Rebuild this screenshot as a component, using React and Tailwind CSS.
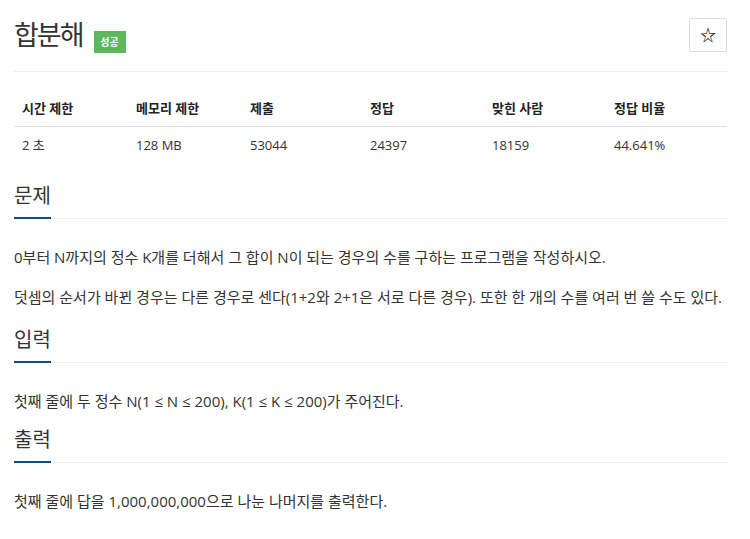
import React from "react";

const font = { fontFamily: '"Open Sans", "Noto Sans CJK KR", sans-serif' };

function Section({ title, children }) {
  return (
    <div>
      <div className="border-b border-[#eee] pb-0">
        <span className="inline-block text-[20px] leading-[30px] pb-[6px] border-b-2 border-[#0e4c86] mb-[-1px] text-[#333]">
          {title}
        </span>
      </div>
      <div className="mt-[26px]">{children}</div>
    </div>
  );
}

export default function App() {
  const heads = ["시간 제한", "메모리 제한", "제출", "정답", "맞힌 사람", "정답 비율"];
  const vals = ["2 초", "128 MB", "53044", "24397", "18159", "44.641%"];
  const widths = ["w-[114px]", "w-[114px]", "w-[120px]", "w-[122px]", "w-[122px]", ""];
  return (
    <div style={font} className="bg-white w-[750px] h-[539px] overflow-hidden text-[#333] pl-[14px] pr-[23px]">
      <div className="pt-[18px] pb-[19px] border-b border-[#eee] flex items-start justify-between">
        <div className="flex items-end h-[32px] mt-[2px]">
          <h1 className="text-[27px] leading-[34px] tracking-[-2px] font-normal text-[#333]">합분해</h1>
          <span className="ml-[11px] mb-[-1px] bg-[#5cb85c] text-white text-[10px] font-bold h-[22px] w-[32px] flex items-center justify-center">
            성공
          </span>
        </div>
        <button className="w-[38px] h-[34px] border border-[#ddd] rounded-[2px] flex items-center justify-center text-[16px] text-black bg-white">
          ☆
        </button>
      </div>
      <table className="mt-[19px] w-full table-fixed text-[13px]">
        <colgroup>
          {widths.map((w, i) => (
            <col key={i} className={w} />
          ))}
        </colgroup>
        <thead>
          <tr className="border-b border-[#ddd]">
            {heads.map((h) => (
              <th key={h} className="text-left font-bold px-2 py-2 leading-[19px] text-[#222]">
                {h}
              </th>
            ))}
          </tr>
        </thead>
        <tbody>
          <tr>
            {vals.map((v) => (
              <td key={v} className="px-2 py-2 leading-[20px]">
                {v}
              </td>
            ))}
          </tr>
        </tbody>
      </table>
      <div className="mt-[18px] text-[15px] leading-[24px]">
        <Section title="문제">
          <p className="mb-[16px]">0부터 N까지의 정수 K개를 더해서 그 합이 N이 되는 경우의 수를 구하는 프로그램을 작성하시오.</p>
          <p className="mb-[16px]">덧셈의 순서가 바뀐 경우는 다른 경우로 센다(1+2와 2+1은 서로 다른 경우). 또한 한 개의 수를 여러 번 쓸 수도 있다.</p>
        </Section>
        <Section title="입력">
          <p className="mb-[12px]">첫째 줄에 두 정수 N(1 ≤ N ≤ 200), K(1 ≤ K ≤ 200)가 주어진다.</p>
        </Section>
        <Section title="출력">
          <p className="mb-[16px]">첫째 줄에 답을 1,000,000,000으로 나눈 나머지를 출력한다.</p>
        </Section>
      </div>
    </div>
  );
}
